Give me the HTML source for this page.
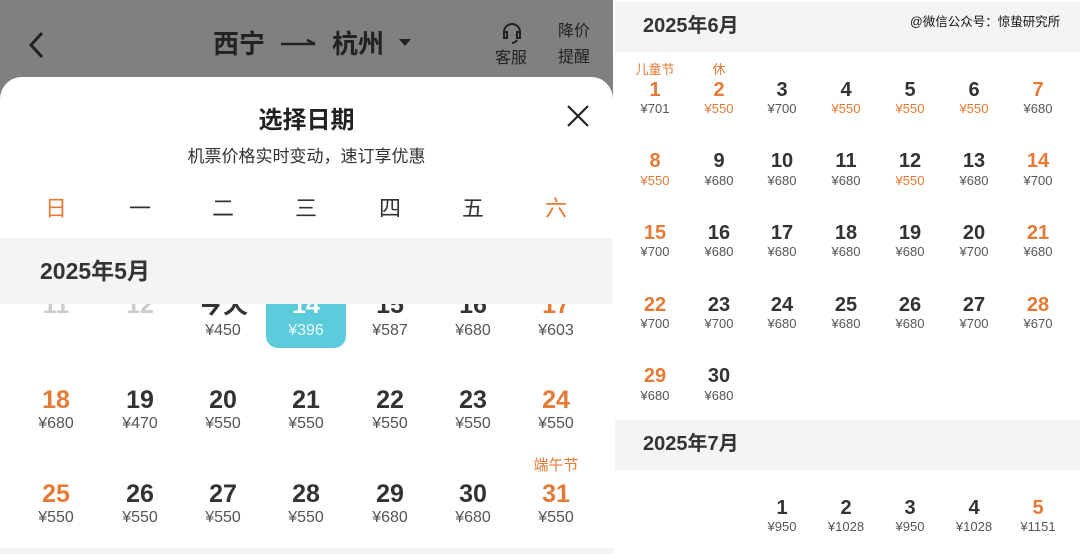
<!DOCTYPE html>
<html><head><meta charset="utf-8"><style>
*{margin:0;padding:0;box-sizing:border-box}
body{width:1080px;height:554px;overflow:hidden;background:#fff;font-family:"Liberation Sans","Noto Sans CJK SC",sans-serif;position:relative;color:#333}
.a{position:absolute}
.n{position:absolute;width:80px;text-align:center;font-weight:bold}
.L{font-size:25px;line-height:28px}
.Lp{font-size:16px;line-height:20px;color:#555}
.R{font-size:20px;line-height:22px}
.Rp{font-size:13px;line-height:16px;color:#555}
.o{color:#e57a35!important}
.t{font-size:13px;line-height:16px;color:#e57a35;font-weight:normal}
</style></head><body>
<div class="a" style="left:0;top:0;width:613px;height:554px;background:#808080;overflow:hidden">
 <svg class="a" style="left:26px;top:30px" width="20" height="30"><path d="M16 3 L5 15 L16 27" stroke="#222" stroke-width="3" fill="none"/></svg>
 <div class="a" style="left:213px;top:26px;font-size:26px;font-weight:bold;color:#222;line-height:36px">西宁</div>
 <svg class="a" style="left:279px;top:36px" width="40" height="12"><path d="M2 8 H36 L28 4" stroke="#222" stroke-width="2.5" fill="none"/></svg>
 <div class="a" style="left:332px;top:26px;font-size:26px;font-weight:bold;color:#222;line-height:36px">杭州</div>
 <svg class="a" style="left:398px;top:38px" width="14" height="10"><path d="M1 1 H13 L7 8Z" fill="#222"/></svg>
 <svg class="a" style="left:499px;top:21px" width="26" height="24"><path d="M5 15 V11 A8 8 0 0 1 21 11 V15 M5 11 v6 h3 v-6z M21 11 v6 h-3 v-6z M18 19 q-2 3 -5 3" stroke="#222" stroke-width="2" fill="none"/></svg>
 <div class="a" style="left:495px;top:44px;font-size:16px;color:#222">客服</div>
 <div class="a" style="left:558px;top:19px;font-size:16px;color:#222;line-height:26px">降价<br>提醒</div>
 <div class="a" style="left:0;top:77px;width:613px;height:480px;background:#fff;border-radius:22px 22px 0 0"></div>
 <div class="a" style="left:0;top:100px;width:613px;text-align:center;font-size:24px;font-weight:bold;color:#222">选择日期</div>
 <svg class="a" style="left:566px;top:104px" width="24" height="24"><path d="M2 2 L22 22 M22 2 L2 22" stroke="#222" stroke-width="2.2"/></svg>
 <div class="a" style="left:0;top:142px;width:613px;text-align:center;font-size:17px;color:#333">机票价格实时变动，速订享优惠</div>
 <div class="a" style="top:191px;left:0;width:613px;font-size:22px;color:#333">
  <span class="a o" style="left:36px;width:40px;text-align:center">日</span>
  <span class="a" style="left:120px;width:40px;text-align:center">一</span>
  <span class="a" style="left:203px;width:40px;text-align:center">二</span>
  <span class="a" style="left:286px;width:40px;text-align:center">三</span>
  <span class="a" style="left:370px;width:40px;text-align:center">四</span>
  <span class="a" style="left:453px;width:40px;text-align:center">五</span>
  <span class="a o" style="left:536px;width:40px;text-align:center">六</span>
 </div>
 <div class="a" style="left:266px;top:280px;width:80px;height:68px;background:#5ccbdb;border-radius:12px"></div>
 <div class="n L" style="left:16px;top:291px;color:#ccc">11</div>
 <div class="n L" style="left:100px;top:291px;color:#ccc">12</div>
 <div class="n L" style="left:183px;top:291px">今天</div><div class="n Lp" style="left:183px;top:321px;font-weight:normal">¥450</div>
 <div class="n L" style="left:266px;top:291px;color:#fff">14</div><div class="n Lp" style="left:266px;top:321px;font-weight:normal;color:#e8fafc">¥396</div>
 <div class="n L" style="left:350px;top:291px">15</div><div class="n Lp" style="left:350px;top:321px;font-weight:normal">¥587</div>
 <div class="n L" style="left:433px;top:291px">16</div><div class="n Lp" style="left:433px;top:321px;font-weight:normal">¥680</div>
 <div class="n L o" style="left:516px;top:291px">17</div><div class="n Lp" style="left:516px;top:321px;font-weight:normal">¥603</div>
 <div class="a" style="left:0;top:238px;width:613px;height:66px;background:#f3f4f6"></div>
 <div class="a" style="left:40px;top:256px;font-size:23px;font-weight:bold;color:#333;line-height:30px">2025年5月</div>
 <div class="n L o" style="left:16px;top:386px">18</div><div class="n Lp" style="left:16px;top:414px;font-weight:normal">¥680</div>
 <div class="n L" style="left:100px;top:386px">19</div><div class="n Lp" style="left:100px;top:414px;font-weight:normal">¥470</div>
 <div class="n L" style="left:183px;top:386px">20</div><div class="n Lp" style="left:183px;top:414px;font-weight:normal">¥550</div>
 <div class="n L" style="left:266px;top:386px">21</div><div class="n Lp" style="left:266px;top:414px;font-weight:normal">¥550</div>
 <div class="n L" style="left:350px;top:386px">22</div><div class="n Lp" style="left:350px;top:414px;font-weight:normal">¥550</div>
 <div class="n L" style="left:433px;top:386px">23</div><div class="n Lp" style="left:433px;top:414px;font-weight:normal">¥550</div>
 <div class="n L o" style="left:516px;top:386px">24</div><div class="n Lp" style="left:516px;top:414px;font-weight:normal">¥550</div>
 <div class="n L o" style="left:16px;top:480px">25</div><div class="n Lp" style="left:16px;top:508px;font-weight:normal">¥550</div>
 <div class="n L" style="left:100px;top:480px">26</div><div class="n Lp" style="left:100px;top:508px;font-weight:normal">¥550</div>
 <div class="n L" style="left:183px;top:480px">27</div><div class="n Lp" style="left:183px;top:508px;font-weight:normal">¥550</div>
 <div class="n L" style="left:266px;top:480px">28</div><div class="n Lp" style="left:266px;top:508px;font-weight:normal">¥550</div>
 <div class="n L" style="left:350px;top:480px">29</div><div class="n Lp" style="left:350px;top:508px;font-weight:normal">¥680</div>
 <div class="n L" style="left:433px;top:480px">30</div><div class="n Lp" style="left:433px;top:508px;font-weight:normal">¥680</div>
 <div class="n t" style="left:516px;top:458px;font-size:15px">端午节</div>
 <div class="n L o" style="left:516px;top:480px">31</div><div class="n Lp" style="left:516px;top:508px;font-weight:normal">¥550</div>
 <div class="a" style="left:0;top:548px;width:613px;height:6px;background:#f3f4f6"></div>
</div>
<div class="a" style="left:615px;top:2px;width:465px;height:50px;background:#f3f4f6"></div>
<div class="a" style="left:643px;top:13px;font-size:20px;font-weight:bold;line-height:26px">2025年6月</div>
<div class="a" style="left:910px;top:11px;font-size:12.5px;color:#111">@微信公众号：惊蛰研究所</div>
<div class="a" style="left:615px;top:420px;width:465px;height:50px;background:#f3f4f6"></div>
<div class="a" style="left:643px;top:431px;font-size:20px;font-weight:bold;line-height:26px">2025年7月</div>
<div class="n t" style="left:615px;top:62px">儿童节</div>
<div class="n t" style="left:679px;top:62px">休</div>
<div class="n R o" style="left:615px;top:79px">1</div><div class="n Rp" style="left:615px;top:101px;font-weight:normal">¥701</div>
<div class="n R o" style="left:679px;top:79px">2</div><div class="n Rp o" style="left:679px;top:101px;font-weight:normal">¥550</div>
<div class="n R" style="left:742px;top:79px">3</div><div class="n Rp" style="left:742px;top:101px;font-weight:normal">¥700</div>
<div class="n R" style="left:806px;top:79px">4</div><div class="n Rp o" style="left:806px;top:101px;font-weight:normal">¥550</div>
<div class="n R" style="left:870px;top:79px">5</div><div class="n Rp o" style="left:870px;top:101px;font-weight:normal">¥550</div>
<div class="n R" style="left:934px;top:79px">6</div><div class="n Rp o" style="left:934px;top:101px;font-weight:normal">¥550</div>
<div class="n R o" style="left:998px;top:79px">7</div><div class="n Rp" style="left:998px;top:101px;font-weight:normal">¥680</div>

<div class="n R o" style="left:615px;top:150px">8</div><div class="n Rp o" style="left:615px;top:173px;font-weight:normal">¥550</div>
<div class="n R" style="left:679px;top:150px">9</div><div class="n Rp" style="left:679px;top:173px;font-weight:normal">¥680</div>
<div class="n R" style="left:742px;top:150px">10</div><div class="n Rp" style="left:742px;top:173px;font-weight:normal">¥680</div>
<div class="n R" style="left:806px;top:150px">11</div><div class="n Rp" style="left:806px;top:173px;font-weight:normal">¥680</div>
<div class="n R" style="left:870px;top:150px">12</div><div class="n Rp o" style="left:870px;top:173px;font-weight:normal">¥550</div>
<div class="n R" style="left:934px;top:150px">13</div><div class="n Rp" style="left:934px;top:173px;font-weight:normal">¥680</div>
<div class="n R o" style="left:998px;top:150px">14</div><div class="n Rp" style="left:998px;top:173px;font-weight:normal">¥700</div>

<div class="n R o" style="left:615px;top:222px">15</div><div class="n Rp" style="left:615px;top:244px;font-weight:normal">¥700</div>
<div class="n R" style="left:679px;top:222px">16</div><div class="n Rp" style="left:679px;top:244px;font-weight:normal">¥680</div>
<div class="n R" style="left:742px;top:222px">17</div><div class="n Rp" style="left:742px;top:244px;font-weight:normal">¥680</div>
<div class="n R" style="left:806px;top:222px">18</div><div class="n Rp" style="left:806px;top:244px;font-weight:normal">¥680</div>
<div class="n R" style="left:870px;top:222px">19</div><div class="n Rp" style="left:870px;top:244px;font-weight:normal">¥680</div>
<div class="n R" style="left:934px;top:222px">20</div><div class="n Rp" style="left:934px;top:244px;font-weight:normal">¥700</div>
<div class="n R o" style="left:998px;top:222px">21</div><div class="n Rp" style="left:998px;top:244px;font-weight:normal">¥680</div>

<div class="n R o" style="left:615px;top:294px">22</div><div class="n Rp" style="left:615px;top:316px;font-weight:normal">¥700</div>
<div class="n R" style="left:679px;top:294px">23</div><div class="n Rp" style="left:679px;top:316px;font-weight:normal">¥700</div>
<div class="n R" style="left:742px;top:294px">24</div><div class="n Rp" style="left:742px;top:316px;font-weight:normal">¥680</div>
<div class="n R" style="left:806px;top:294px">25</div><div class="n Rp" style="left:806px;top:316px;font-weight:normal">¥680</div>
<div class="n R" style="left:870px;top:294px">26</div><div class="n Rp" style="left:870px;top:316px;font-weight:normal">¥680</div>
<div class="n R" style="left:934px;top:294px">27</div><div class="n Rp" style="left:934px;top:316px;font-weight:normal">¥700</div>
<div class="n R o" style="left:998px;top:294px">28</div><div class="n Rp" style="left:998px;top:316px;font-weight:normal">¥670</div>

<div class="n R o" style="left:615px;top:365px">29</div><div class="n Rp" style="left:615px;top:388px;font-weight:normal">¥680</div>
<div class="n R" style="left:679px;top:365px">30</div><div class="n Rp" style="left:679px;top:388px;font-weight:normal">¥680</div>
<div class="n R" style="left:742px;top:497px">1</div><div class="n Rp" style="left:742px;top:519px;font-weight:normal">¥950</div>
<div class="n R" style="left:806px;top:497px">2</div><div class="n Rp" style="left:806px;top:519px;font-weight:normal">¥1028</div>
<div class="n R" style="left:870px;top:497px">3</div><div class="n Rp" style="left:870px;top:519px;font-weight:normal">¥950</div>
<div class="n R" style="left:934px;top:497px">4</div><div class="n Rp" style="left:934px;top:519px;font-weight:normal">¥1028</div>
<div class="n R o" style="left:998px;top:497px">5</div><div class="n Rp" style="left:998px;top:519px;font-weight:normal">¥1151</div>
</body></html>
